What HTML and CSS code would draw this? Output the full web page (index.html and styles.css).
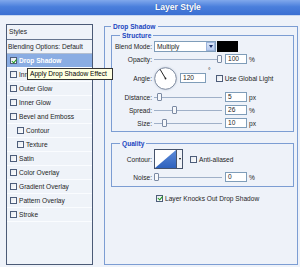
FILE: index.html
```html
<!DOCTYPE html>
<html lang="en">
<head>
<meta charset="UTF-8">
<title>Layer Style</title>
<link rel="stylesheet" href="styles.css">
</head>
<body>

<div class="dialog">
    <div class="titlebar">Layer Style</div>

    <div class="main">
        <div class="styles-list">
            <div class="list-head">Styles</div>
            <div class="list-blend">Blending Options: Default</div>
            <div class="list-item selected"><span class="check on"></span>Drop Shadow</div>
            <div class="list-item"><span class="check"></span>Inner Shadow</div>
            <div class="list-item"><span class="check"></span>Outer Glow</div>
            <div class="list-item"><span class="check"></span>Inner Glow</div>
            <div class="list-item"><span class="check"></span>Bevel and Emboss</div>
            <div class="list-item sub"><span class="check"></span>Contour</div>
            <div class="list-item sub"><span class="check"></span>Texture</div>
            <div class="list-item"><span class="check"></span>Satin</div>
            <div class="list-item"><span class="check"></span>Color Overlay</div>
            <div class="list-item"><span class="check"></span>Gradient Overlay</div>
            <div class="list-item"><span class="check"></span>Pattern Overlay</div>
            <div class="list-item"><span class="check"></span>Stroke</div>
        </div>

        <fieldset class="group outer">
            <legend>Drop Shadow</legend>

            <fieldset class="group structure">
                <legend>Structure</legend>
                <div class="row">
                    <span class="label">Blend Mode:</span>
                    <div class="select">Multiply<span class="select-btn"></span></div>
                    <span class="swatch"></span>
                </div>
                <div class="row">
                    <span class="label">Opacity:</span>
                    <div class="slider"><span class="thumb" style="margin-left: 63px"></span></div>
                    <span class="field">100</span><span class="unit">%</span>
                </div>
                <div class="row angle-row">
                    <span class="label">Angle:</span>
                    <svg class="dial" width="23" height="23" viewBox="0 0 23 23">
                        <circle cx="11.5" cy="11.5" r="10.8" fill="#fff" stroke="#7d899e" stroke-width="1"/>
                        <line x1="11.5" y1="11.5" x2="6" y2="2.2" stroke="#222" stroke-width="1"/>
                        <circle cx="11.5" cy="11.5" r="0.9" fill="#222"/>
                    </svg>
                    <span class="field angle">120</span><span class="unit deg">°</span>
                    <span class="check global"></span><span>Use Global Light</span>
                </div>
                <div class="row">
                    <span class="label">Distance:</span>
                    <div class="slider"><span class="thumb" style="margin-left: 3px"></span></div>
                    <span class="field">5</span><span class="unit">px</span>
                </div>
                <div class="row">
                    <span class="label">Spread:</span>
                    <div class="slider"><span class="thumb" style="margin-left: 18px"></span></div>
                    <span class="field">26</span><span class="unit">%</span>
                </div>
                <div class="row">
                    <span class="label">Size:</span>
                    <div class="slider"><span class="thumb" style="margin-left: 8px"></span></div>
                    <span class="field">10</span><span class="unit">px</span>
                </div>
            </fieldset>

            <fieldset class="group quality">
                <legend>Quality</legend>
                <div class="row contour-row">
                    <span class="label">Contour:</span>
                    <div class="contour">
                        <svg width="21" height="18" viewBox="0 0 21 18">
                            <defs>
                                <linearGradient id="cfill" x1="0" y1="0" x2="0" y2="1">
                                    <stop offset="0" stop-color="#5d8bd8"/>
                                    <stop offset="1" stop-color="#2f62bd"/>
                                </linearGradient>
                            </defs>
                            <polygon points="0,18 21,0 21,18" fill="url(#cfill)"/>
                        </svg>
                        <span class="contour-btn"></span>
                    </div>
                    <span class="check anti"></span><span>Anti-aliased</span>
                </div>
                <div class="row">
                    <span class="label">Noise:</span>
                    <div class="slider"><span class="thumb" style="margin-left: 0px"></span></div>
                    <span class="field">0</span><span class="unit">%</span>
                </div>
            </fieldset>

            <div class="row knockout">
                <span class="check on"></span><span>Layer Knocks Out Drop Shadow</span>
            </div>
        </fieldset>
    </div>

    <!-- hover tooltip over the styles list -->
    <div class="tooltip">Apply Drop Shadow Effect</div>
</div>

</body>
</html>
```

FILE: styles.css
```css
body {
    margin: 0;
    width: 300px;
    height: 267px;
    overflow: hidden;
    background-color: #eef2f9;
    font-family: "Liberation Sans", Arial, sans-serif;
    font-size: 6.6px;
    color: #1e1e1e;
}
.dialog {
    position: relative;
    height: 267px;
    display: flex;
    flex-direction: column;
}
.titlebar {
    height: 16px;
    line-height: 15px;
    padding-left: 155px;
    box-sizing: border-box;
    background: linear-gradient(#80a8ec, #4a7fdc 45%, #3b6fd2);
    border-bottom: 1px solid #c8d7f0;
    color: #fff;
    font-weight: bold;
    font-size: 8.6px;
    text-shadow: 0 0 1px #27509e;
}
.main {
    flex: 1;
    display: flex;
    gap: 11px;
    padding: 6px 2px 2px 6px;
    min-height: 0;
}

/* left column: list of effects */
.styles-list {
    width: 87px;
    margin-top: 2px;
    box-sizing: border-box;
    border: 1px solid #4b5a76;
    background-color: #eff3f9;
}
.list-head {
    height: 14px;
    line-height: 14px;
    padding-left: 2px;
    border-bottom: 1px solid #66758f;
}
.list-blend {
    height: 13px;
    line-height: 13px;
    padding-left: 1px;
    border-bottom: 1px solid #b4bfd0;
}
.list-item {
    height: 13px;
    display: flex;
    align-items: center;
    padding-left: 3px;
    border-bottom: 1px solid #fafcff;
    white-space: nowrap;
}
.list-item.sub {
    padding-left: 10px;
}
.list-item.selected {
    background-color: #8aade3;
    color: #fff;
    font-weight: bold;
}
.list-item .check {
    margin-right: 2px;
}

/* checkboxes */
.check {
    display: inline-block;
    position: relative;
    width: 7px;
    height: 7px;
    box-sizing: border-box;
    border: 1px solid #4d5d7a;
    background: linear-gradient(135deg, #e4e8ee, #fff);
    flex-shrink: 0;
}
.check.on::after {
    content: "";
    position: absolute;
    left: 1.5px;
    top: -0.5px;
    width: 1.5px;
    height: 3.5px;
    border-right: 1.2px solid #1f9b1f;
    border-bottom: 1.2px solid #1f9b1f;
    transform: rotate(40deg);
}

/* group boxes */
.group {
    margin: 0;
    min-width: 0;
    border: 1px solid #7c9dd3;
}
.group legend {
    padding: 0 2px;
    line-height: 9px;
    font-weight: bold;
    color: #1b46c0;
}
.outer {
    flex: 1;
    padding: 0 3px 0 6px;
}
.structure,
.quality {
    padding: 0 0 1px 0;
}
.structure legend,
.quality legend {
    margin-left: 8px;
}
.quality {
    margin-top: 7px;
    padding-bottom: 2px;
}

/* setting rows */
.row {
    display: flex;
    align-items: center;
    height: 12px;
    margin-bottom: 1px;
    white-space: nowrap;
}
.label {
    width: 40px;
    margin-right: 2px;
    text-align: right;
    flex-shrink: 0;
}
.select {
    width: 62px;
    height: 11px;
    box-sizing: border-box;
    border: 1px solid #7f9db9;
    background-color: #fff;
    display: flex;
    align-items: center;
    justify-content: space-between;
    padding-left: 2px;
}
.select-btn {
    width: 9px;
    height: 9px;
    box-sizing: border-box;
    border: 1px solid #9cb3da;
    background: linear-gradient(#dbe6f8, #b5c9ee);
    display: flex;
    align-items: center;
    justify-content: center;
}
.select-btn::after {
    content: "";
    border-left: 2.5px solid transparent;
    border-right: 2.5px solid transparent;
    border-top: 3px solid #1c2f66;
}
.swatch {
    width: 21px;
    height: 11px;
    margin-left: 1px;
    background-color: #000;
}
.slider {
    width: 68px;
    height: 12px;
    display: flex;
    align-items: center;
    background: linear-gradient(#9fb0c8, #9fb0c8) center / 100% 1px no-repeat;
}
.thumb {
    width: 5px;
    height: 8px;
    box-sizing: border-box;
    border: 1px solid #7b8aa3;
    border-radius: 1px;
    background-color: #f6f8fb;
}
.field {
    width: 22px;
    height: 10px;
    line-height: 8px;
    box-sizing: border-box;
    margin-left: 3px;
    padding-left: 2px;
    border: 1px solid #7f9db9;
    background-color: #fff;
}
.field.angle {
    width: 26px;
}
.unit {
    margin-left: 2px;
}
.unit.deg {
    align-self: flex-start;
    margin-top: 1px;
}
.angle-row {
    height: 24px;
}
.angle-row .check {
    margin-left: 5px;
    margin-right: 2px;
}
.dial {
    display: block;
    filter: drop-shadow(0 0 1px #c5cfdd);
}

/* contour picker */
.contour-row {
    height: 20px;
    margin-top: 1px;
    margin-bottom: 2px;
}
.contour {
    display: flex;
    height: 20px;
    box-sizing: border-box;
    border: 1px solid #46536b;
    background-color: #fff;
}
.contour svg {
    display: block;
}
.contour-btn {
    width: 5px;
    border-left: 1px solid #46536b;
    background-color: #f2f4f8;
    display: flex;
    align-items: center;
    justify-content: center;
}
.contour-btn::after {
    content: "";
    border-left: 1.5px solid transparent;
    border-right: 1.5px solid transparent;
    border-top: 2px solid #000;
}
.contour-row .check {
    margin-left: 7px;
    margin-right: 2px;
}
.knockout {
    margin-top: 5px;
    padding-left: 45px;
}
.knockout .check {
    margin-right: 2px;
}

/* tooltip over list */
.tooltip {
    position: absolute;
    left: 27px;
    top: 68px;
    width: 86px;
    height: 12px;
    box-sizing: border-box;
    padding-left: 2px;
    line-height: 10px;
    border: 1px solid #333;
    background-color: #ffffe1;
    color: #000;
    white-space: nowrap;
}
```
